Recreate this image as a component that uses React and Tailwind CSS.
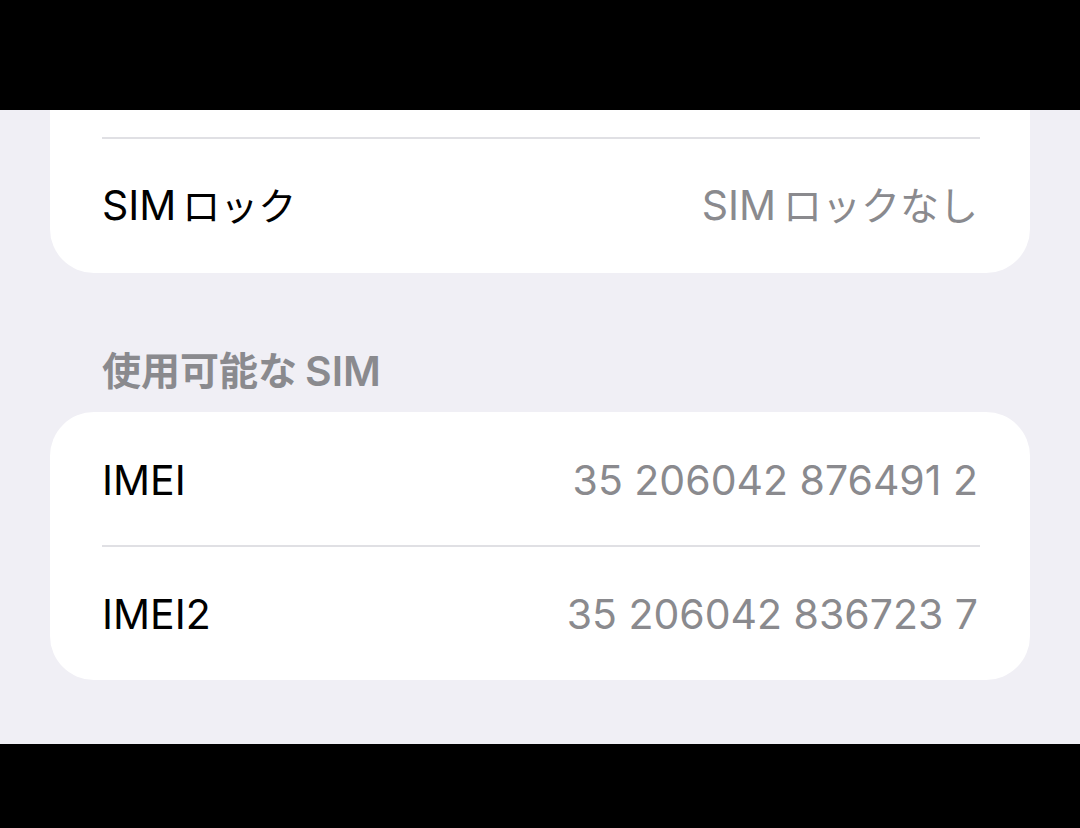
export default function App() {
  const font = { fontFamily: 'Inter, "Noto Sans CJK JP", sans-serif' };
  return (
    <div className="w-[1080px] h-[828px] bg-black flex flex-col" style={font}>
      <div className="h-[110px] bg-black shrink-0" />
      <div className="h-[634px] bg-[#f0eff5] overflow-hidden shrink-0 flex flex-col">
        <div className="mx-[50px] mt-[-107px] bg-white rounded-[44px] flex flex-col">
          <div className="h-[134px]" />
          <div className="ml-[52px] mr-[50px] h-[2px] bg-[#e0e0e4]" />
          <div className="h-[134px] flex items-center justify-between pl-[52px] pr-[52px] text-[41px]">
            <span className="text-black flex items-center">
              SIM<span className="ml-[6px] text-[38px]">ロック</span>
            </span>
            <span className="text-[#8a8a8e] flex items-center">
              SIM<span className="ml-[7px] text-[39px]">ロックなし</span>
            </span>
          </div>
        </div>
        <div className="h-[139px] flex items-center pl-[102px] font-semibold text-[#8a8a8e] pt-[58px]">
          <span className="text-[39px]">使用可能な</span>
          <span className="ml-[8px] text-[41px]">SIM</span>
        </div>
        <div className="mx-[50px] bg-white rounded-[44px] flex flex-col">
          <div className="h-[133px] flex items-center justify-between pl-[52px] pr-[52px] pt-[4px] text-[41px]">
            <span className="text-black">IMEI</span>
            <span className="text-[#8a8a8e]">35 206042 876491 2</span>
          </div>
          <div className="ml-[52px] mr-[50px] h-[2px] bg-[#e0e0e4]" />
          <div className="h-[133px] flex items-center justify-between pl-[52px] pr-[52px] pt-[2px] text-[41px]">
            <span className="text-black">IMEI2</span>
            <span className="text-[#8a8a8e]">35 206042 836723 7</span>
          </div>
        </div>
      </div>
      <div className="flex-1 bg-black" />
    </div>
  );
}
